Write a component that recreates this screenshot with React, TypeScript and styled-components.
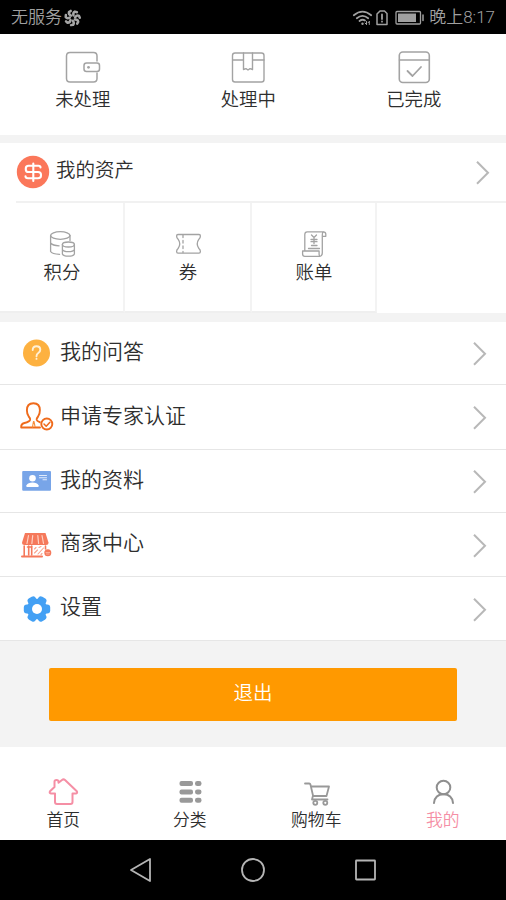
import React from "react";
import styled, { createGlobalStyle } from "styled-components";

const GlobalStyle = createGlobalStyle`
  * { box-sizing: border-box; }
  body { margin: 0; background: #f3f3f3; }
`;

const Screen = styled.div`
  width: 506px;
  height: 900px;
  display: flex;
  flex-direction: column;
  overflow: hidden;
  background: #f3f3f3;
  color: #2e2e2e;
  font-family: Roboto, "Noto Sans CJK SC DemiLight", "Noto Sans CJK SC", sans-serif;
  font-weight: 350;
  white-space: nowrap;
`;

const Svg = styled.svg`
  display: block;
  flex: none;
  fill: none;
  stroke-linecap: round;
  stroke-linejoin: round;
`;

const StatusBar = styled.header`
  height: 34px;
  padding: 1px 11px 0;
  display: flex;
  align-items: center;
  justify-content: space-between;
  background: #000;
  color: #a0a0a0;
  font-size: 17px;
  line-height: 33px;
`;

const StatusGroup = styled.div`
  display: flex;
  align-items: center;
`;

const Orders = styled.section`
  height: 101px;
  margin-bottom: 8px;
  display: flex;
  background: #fff;
`;

const OrderItem = styled.div`
  width: 165.5px;
  padding-top: 14px;
  display: flex;
  flex-direction: column;
  align-items: center;
  font-size: 18.4px;
  line-height: 31px;
`;

const Assets = styled.section`
  height: 170px;
  margin-bottom: 9px;
  background: #fff;
`;

const AssetsHeader = styled.div`
  height: 60px;
  margin-left: 16px;
  padding-right: 12px;
  display: flex;
  align-items: center;
  border-bottom: 2px solid #f1f1f1;
`;

const AssetsTitle = styled.span`
  flex: 1;
  padding: 0 0 2px 6px;
  font-size: 19.5px;
  line-height: 28px;
`;

const AssetGrid = styled.div`
  height: 110px;
  display: grid;
  grid-template-columns: 125px 127px 125px;
`;

const AssetItem = styled.div`
  padding: 25px 0 0 1px;
  display: flex;
  flex-direction: column;
  align-items: center;
  border-right: 2px solid #f3f3f3;
  border-bottom: 2px solid #efefef;
  font-size: 18.4px;
  line-height: 29px;
`;

const Menu = styled.nav`
  display: grid;
  grid-template-rows: 63px 65px 63px 64px 64px;
`;

const MenuRow = styled.div`
  padding: 0 15px 0 18px;
  display: flex;
  align-items: center;
  background: #fff;
  border-bottom: 1px solid #e6e6e6;
`;

const MenuLabel = styled.span`
  flex: 1;
  padding: 0 0 3px 6px;
  font-size: 21px;
  line-height: 30px;
`;

const LogoutArea = styled.div`
  height: 106px;
  padding: 27px 49px 0;
`;

const LogoutButton = styled.button`
  display: block;
  width: 408px;
  height: 53px;
  padding: 0 0 6px;
  border: 0;
  border-radius: 2px;
  background: #ff9900;
  color: #fff;
  font: inherit;
  font-size: 19.5px;
`;

const TabBar = styled.nav`
  height: 93px;
  display: grid;
  grid-template-columns: repeat(4, 1fr);
  background: #fff;
`;

const Tab = styled.div<{ $active?: boolean }>`
  padding-top: 29px;
  display: flex;
  flex-direction: column;
  align-items: center;
  color: ${(p) => (p.$active ? "#f58fa5" : "#2e2e2e")};
  font-size: 16.8px;
  line-height: 24px;
`;

const SystemBar = styled.footer`
  height: 60px;
  display: flex;
  justify-content: center;
  align-items: center;
  gap: 86px;
  background: #000;
`;

const GREY = "#a3a3a3";

const Pinwheel = () => (
  <Svg width="20" height="18" viewBox="-10.500 -9 20 18" stroke="#a6a6a6" strokeWidth="2.500">
    {[0, 51.4, 102.9, 154.3, 205.7, 257.1, 308.6].map((a) => (
      <path key={a} transform={`rotate(${a})`} d="M1-2.600Q.2-5.500 2.400-6.400L4.400-5.800" />
    ))}
  </Svg>
);

const StatusIcons = () => (
  <Svg width="78" height="24" viewBox="351 5 78 24" stroke="#a0a0a0" strokeWidth="1.800">
    <path d="M353.800 14.200Q362.500 7 371.200 14.200M356.800 17.200Q362.500 12.500 368.200 17.200M359.500 20Q362.500 17.700 365 19.500" />
    <circle cx="362.500" cy="22.700" r="1.200" fill="#a0a0a0" stroke="none" />
    <path d="M366.500 20.500v3m-1.400-1.400 1.400 1.400M369.300 23.500v-3m-1.300 1.300 1.300-1.300" strokeWidth="1" />
    <path d="M380 10h4.500l2.500 2.500V23.500h-10V13z" strokeWidth="1.500" />
    <path d="M382 13.500v4.500M382 20.500v.2" />
    <rect x="396" y="10.500" width="24.500" height="12.500" rx="1" strokeWidth="1.300" />
    <path d="M398 12.500h18v8.500h-18z" fill="#a0a0a0" stroke="none" />
    <path d="M423 14v5.500" strokeWidth="1.500" />
  </Svg>
);

const WalletIcon = () => (
  <Svg width="36" height="36" viewBox="65 48 36 36" stroke={GREY} strokeWidth="1.500">
    <path d="M97 61V56q0-3.500-3.500-3.500H70q-3.500 0-3.500 3.500V78.500q0 3.500 3.500 3.500H93.500q3.500 0 3.500-3.500V73" />
    <rect x="84" y="63" width="15.500" height="8.500" rx="2.500" />
    <circle cx="88.500" cy="67.300" r="1.400" fill={GREY} stroke="none" />
  </Svg>
);

const BoxIcon = () => (
  <Svg width="36" height="36" viewBox="230 48 36 36" stroke={GREY} strokeWidth="1.400">
    <rect x="232.500" y="53" width="31.500" height="29" rx="2.500" />
    <path d="M233 60h10.500M252.500 60H264M243.500 53v16.500l2.500-.8 2 1.300 2-1.300 2.500.8V53" />
  </Svg>
);

const DoneIcon = () => (
  <Svg width="36" height="36" viewBox="396 48 36 36" stroke={GREY} strokeWidth="1.600">
    <rect x="399.300" y="52" width="30" height="30.500" rx="3.500" />
    <path d="M399.500 60h29.500" />
    <path d="M407.500 71l5 5 8.500-9" strokeWidth="1.800" />
  </Svg>
);

const DollarIcon = () => (
  <Svg width="34" height="34" viewBox="16 155 34 34" stroke="#fff" strokeWidth="2.100">
    <circle cx="33" cy="172" r="16.200" fill="#fb775a" stroke="none" />
    <path d="M40.500 167.500q0-1.800-2-1.800h-10q-2.700 0-2.700 2.700v1q0 2.600 2.700 2.600h9.500q3 0 3 2.800v.8q0 2.700-3 2.700h-10q-2.500 0-2.500-2M33.300 163.500v17.500" />
  </Svg>
);

const CoinsIcon = () => (
  <Svg width="32" height="30" viewBox="46 228 32 30" stroke={GREY} strokeWidth="1.300">
    <ellipse cx="60.300" cy="235.500" rx="9.700" ry="3.800" />
    <path d="M50.600 235.500v16q1.500 2.500 9 2.800M50.600 243q2 2.600 8.500 2.800M70 235.500v5" />
    <ellipse cx="68.400" cy="244.500" rx="6" ry="2.500" />
    <path d="M62.400 244.500v9.500q1 2.200 6 2.200t6-2.200v-9.500M62.400 249.500q1 2.200 6 2.200t6-2.200" />
  </Svg>
);

const TicketIcon = () => (
  <Svg width="30" height="30" viewBox="173 228 30 30" stroke={GREY} strokeWidth="1.300">
    <path d="M178 234.500h21q1.400 0 1.400 1.400 0 2-1.500 3.300-3.300 4.800 0 9.300 1.500 1.300 1.500 3 0 1.600-1.400 1.600H178q-1.400 0-1.400-1.600 0-1.700 1.500-3 3.300-4.500 0-9.300-1.500-1.300-1.500-3.300 0-1.400 1.400-1.400z" />
    <path d="M183 235v17.500" strokeDasharray="2.500 3" />
  </Svg>
);

const BillIcon = () => (
  <Svg width="30" height="30" viewBox="299 228 30 30" stroke={GREY} strokeWidth="1.300">
    <path d="M304.800 251v-16.500q0-2.700 2.500-2.700h16q2.500 0 2.500 2.500v2h-3M323.300 232q-1 .7-1 3v18q0 3-2.500 3.300h-15q-2.200 0-2.200-2.300v-3h16.500v3q0 2 1 2.300" />
    <path d="M311.500 235l2.500 2.500 2.500-2.500M314 237.500v6M311 239.500h6M311 241.700h6M311.500 245.500h5.500M308.500 248.500h11" />
  </Svg>
);

const QuestionIcon = () => (
  <Svg width="36" height="34" viewBox="18 336 36 34" stroke="#fff0d5" strokeWidth="1.900">
    <circle cx="36.500" cy="353" r="13.500" fill="#fdb140" stroke="none" />
    <path d="M32.700 350q0-3.800 3.800-3.800t3.800 3.500q0 2-2 3.300-1.800 1.300-1.800 3.200M36.500 358.700v.2" />
  </Svg>
);

const ExpertIcon = () => (
  <Svg width="36" height="34" viewBox="18 401 36 34" stroke="#ef6b1c" strokeWidth="1.900">
    <path d="M40 428.500H21.200q-.4-3.400 3.200-4.500 5.300-1.500 5.700-3.300.2-1.400-1.400-3.200-1.800-2.200-1.800-6.200 0-7 6.500-7t6.500 7q0 4-1.800 6.200-1.600 1.800-1.400 3.400.2 1 3 2.300" />
    <path d="M33.500 422.500l-1 5.500M34 422.500l1 5" strokeWidth="1.200" stroke="#f78e3c" />
    <circle cx="46.800" cy="425" r="5.500" />
    <path d="M44 425l2.200 2.200 3.700-4" strokeWidth="1.500" />
  </Svg>
);

const ProfileIcon = () => (
  <Svg width="36" height="34" viewBox="18 464 36 34">
    <rect x="22.200" y="471" width="28.800" height="19.700" rx="1" fill="#78a5e8" />
    <circle cx="32.500" cy="478.200" r="3.300" fill="#fff" />
    <path d="M26.500 487v-1.700q1.500-2.800 6-2.800t6 2.800v1.700z" fill="#fff" />
    <path d="M39.500 475.500h7M39.500 477.700h7M43 479.700h3.500" stroke="#e1ebfb" strokeWidth="1.100" />
  </Svg>
);

const ShopIcon = () => (
  <Svg width="36" height="34" viewBox="18 528 36 34" stroke="#f5795b" strokeWidth="1.400">
    <path d="M25 533h20.500l3 9.500q0 2.500-2.500 2.500H24.500q-2.500 0-2.500-2.500z" fill="#f5795b" stroke="none" />
    <path d="M28.500 535.500l-1.500 8M32.700 535.500l-.8 8M37.800 535.500l.8 8M42 535.500l1.500 8" stroke="#ffd0c1" strokeWidth="1.200" />
    <path d="M24.200 546v10M28.700 546v9M31.700 546v9M27.500 547h4.500M45.500 546v3" strokeWidth="1.600" />
    <path d="M22 556.500h20" strokeWidth="2" />
    <path d="M34.500 553l3-3M36 547.500l-1.500 1.500M38 554l5.500-6M39 547.500l2-1M42 553.500l-1 1" strokeWidth="1.100" stroke="#f9a28c" />
    <circle cx="47.800" cy="552.800" r="3.500" fill="#f5795b" stroke="none" />
    <path d="M46 552.500h3.600M46.500 554h2.600" stroke="#ffc6b5" strokeWidth=".7" />
  </Svg>
);

const GearIcon = () => (
  <Svg width="36" height="34" viewBox="18 592 36 34">
    <g fill="#43a0f4">
      <circle cx="37" cy="609" r="10.300" />
      {[30, 90, 150, 210, 270, 330].map((a) => (
        <rect key={a} x="32.500" y="595.800" width="9" height="8" rx="3" transform={`rotate(${a} 37 609)`} />
      ))}
    </g>
    <circle cx="37" cy="609" r="5" fill="#fff" />
  </Svg>
);

const Chevron = () => (
  <Svg width="20" height="28" viewBox="0 0 20 28" stroke="#b8b8b8" strokeWidth="2">
    <path d="M3 3.700L14 14.700 3 25.700" strokeLinecap="butt" strokeLinejoin="miter" />
  </Svg>
);

const HomeIcon = () => (
  <Svg width="34" height="32" viewBox="46 776 34 32" stroke="#f58fa5" strokeWidth="2">
    <path d="M54.500 787v-5.500q0-1.500 2-1.500t2 1.500v1.300L62 780q1.500-1.200 3 0l11.800 11.300q1 1.800-.8 2.200h-3.500v8.500q0 2-2 2H57q-2 0-2-2v-8.500h-4q-2-.4-1-2.200z" />
  </Svg>
);

const CategoryIcon = () => (
  <Svg width="30" height="32" viewBox="175 776 30 32">
    {[781, 789.4, 797.8].map((y) => (
      <g key={y} fill="#999">
        <rect x="179.500" y={y} width="13.500" height="5" rx="2" />
        <rect x="195" y={y} width="6.500" height="5" rx="2.300" />
      </g>
    ))}
  </Svg>
);

const CartIcon = () => (
  <Svg width="30" height="32" viewBox="301 776 30 32" stroke="#999" strokeWidth="1.800">
    <path d="M305 783.500h4.200q1 0 1.300 1.200l2.500 10.800-1 4M311 786.500h18l-2.500 9.500H313.500M312 799.500h15.500" />
    <circle cx="315.300" cy="802.800" r="2" />
    <circle cx="325.300" cy="802.800" r="2" />
  </Svg>
);

const UserIcon = () => (
  <Svg width="30" height="32" viewBox="428 776 30 32" stroke="#8f8f8f" strokeWidth="2">
    <circle cx="443.500" cy="787.500" r="6.800" />
    <path d="M434 803q1-8.700 9.500-8.700t9.500 8.700" />
  </Svg>
);

const orders = [
  { label: "未处理", Icon: WalletIcon },
  { label: "处理中", Icon: BoxIcon },
  { label: "已完成", Icon: DoneIcon },
];
const assets = [
  { label: "积分", Icon: CoinsIcon },
  { label: "券", Icon: TicketIcon },
  { label: "账单", Icon: BillIcon },
];
const menu = [
  { label: "我的问答", Icon: QuestionIcon },
  { label: "申请专家认证", Icon: ExpertIcon },
  { label: "我的资料", Icon: ProfileIcon },
  { label: "商家中心", Icon: ShopIcon },
  { label: "设置", Icon: GearIcon },
];
const tabs = [
  { label: "首页", Icon: HomeIcon },
  { label: "分类", Icon: CategoryIcon },
  { label: "购物车", Icon: CartIcon },
  { label: "我的", Icon: UserIcon, active: true },
];

export default function App() {
  return (
    <>
      <GlobalStyle />
      <Screen>
        <StatusBar>
          <StatusGroup>
            <span>无服务</span>
            <Pinwheel />
          </StatusGroup>
          <StatusGroup>
            <StatusIcons />
            <span>晚上8:17</span>
          </StatusGroup>
        </StatusBar>
        <Orders>
          {orders.map(({ label, Icon }) => (
            <OrderItem key={label}>
              <Icon />
              <span>{label}</span>
            </OrderItem>
          ))}
        </Orders>
        <Assets>
          <AssetsHeader>
            <DollarIcon />
            <AssetsTitle>我的资产</AssetsTitle>
            <Chevron />
          </AssetsHeader>
          <AssetGrid>
            {assets.map(({ label, Icon }) => (
              <AssetItem key={label}>
                <Icon />
                <span>{label}</span>
              </AssetItem>
            ))}
          </AssetGrid>
        </Assets>
        <Menu>
          {menu.map(({ label, Icon }) => (
            <MenuRow key={label}>
              <Icon />
              <MenuLabel>{label}</MenuLabel>
              <Chevron />
            </MenuRow>
          ))}
        </Menu>
        <LogoutArea>
          <LogoutButton>退出</LogoutButton>
        </LogoutArea>
        <TabBar>
          {tabs.map(({ label, Icon, active }) => (
            <Tab key={label} $active={active}>
              <Icon />
              <span>{label}</span>
            </Tab>
          ))}
        </TabBar>
        <SystemBar>
          <Svg width="26" height="26" viewBox="0 0 26 26" stroke="#b5b5b5" strokeWidth="1.800">
            <path d="M22 2v22L3 13z" />
          </Svg>
          <Svg width="26" height="26" viewBox="0 0 26 26" stroke="#b5b5b5" strokeWidth="1.800">
            <circle cx="13" cy="13" r="11" />
          </Svg>
          <Svg width="26" height="26" viewBox="0 0 26 26" stroke="#b5b5b5" strokeWidth="1.800">
            <rect x="4" y="3.500" width="19" height="19" rx=".5" />
          </Svg>
        </SystemBar>
      </Screen>
    </>
  );
}
